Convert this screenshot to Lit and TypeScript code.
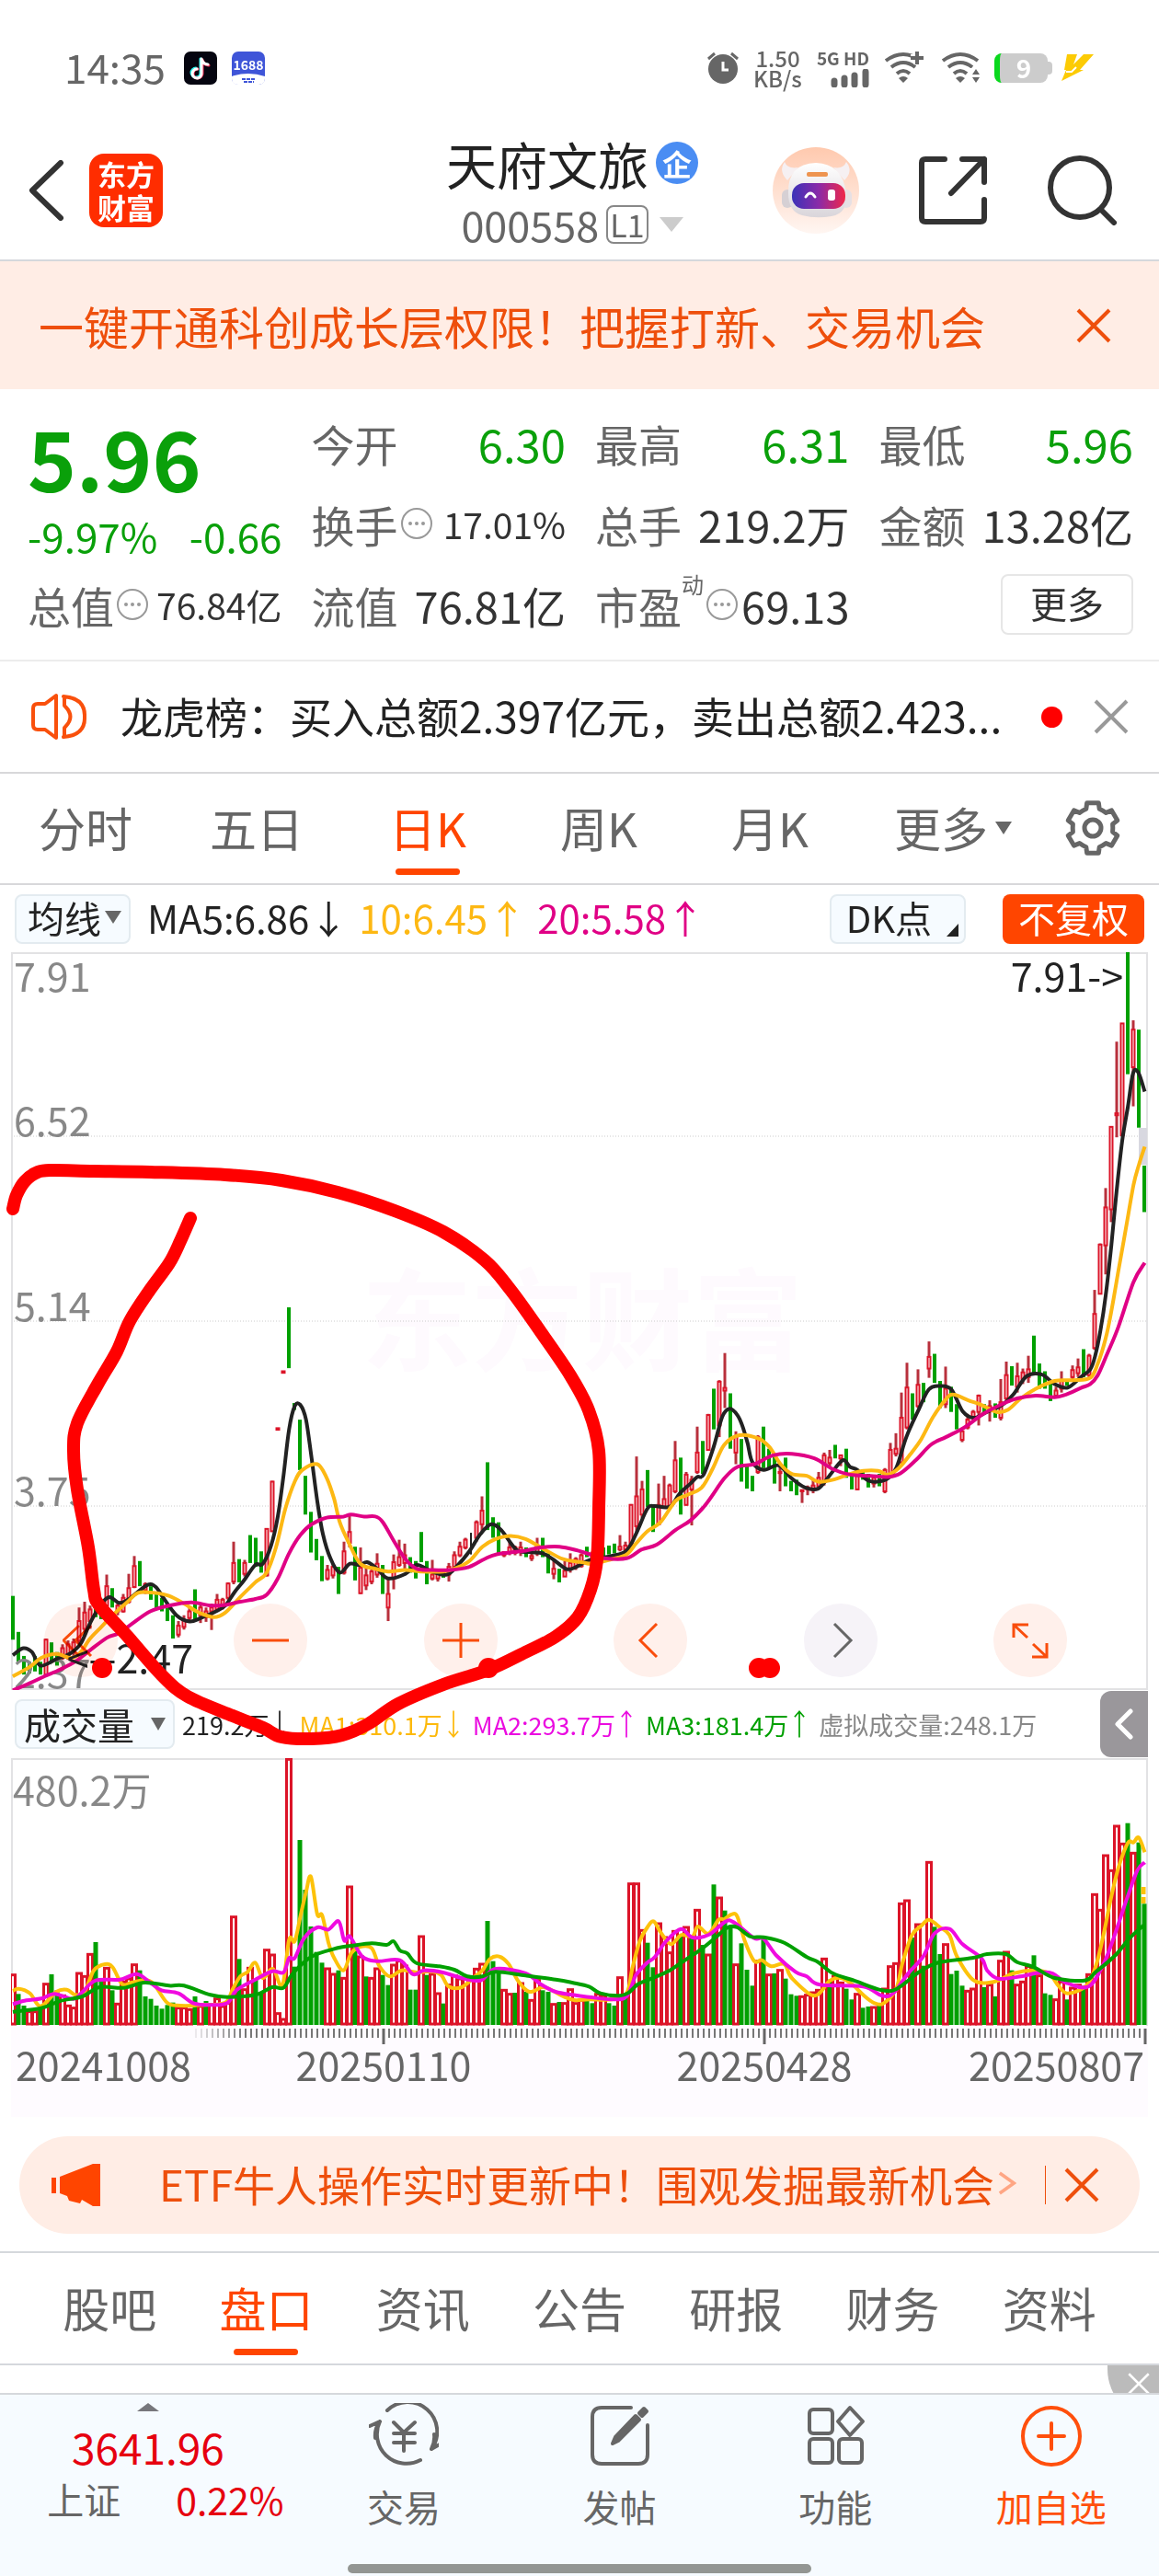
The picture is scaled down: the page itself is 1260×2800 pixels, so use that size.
import { LitElement, html, svg, css } from "lit";
import { customElement, state } from "lit/decorators.js";
import { classMap } from "lit/directives/class-map.js";

const STEP = 6;
const FIRST_X = 14;
const barX = (i: number) => FIRST_X + i * STEP;

/* Price levels count down from the 6.52–5.14 band; one unit is 0.421 of a chart unit. */
const priceY = (v: number) => 205 + v * 0.421;
/* Volume levels count down from the 480.2万 line. */
const volumeY = (v: number) => (v - 213) / 3;

/* One candle per trading day: direction high,low[,body top,body bottom] */
const CANDLES = `g1175,1288 g1268,1345 g1330,1378 g1345,1375 g1330,1370 g1345,1378 r1285,1382,1288,1378 g1295,1345 g1320,1355 r1300,1340,1310,1335
r1290,1340,1300,1330 r1285,1330,1295,1320 r1205,1300,1240,1290 r1190,1270,1218,1260 r1200,1260,1210,1240 g1190,1230 g1190,1235 r1120,1210,1150,1200 g1155,1205 r1195,1225,1200,1215
r1170,1218,1180,1215 r1118,1195,1155,1190 r1072,1155,1098,1152 g1085,1150 r1140,1170,1145,1160 g1150,1185 g1165,1210 g1180,1215 g1205,1240 g1225,1285
r1240,1282,1252,1275 r1225,1262,1238,1255 r1205,1240,1215,1232 g1158,1238 r1195,1245,1205,1225 r1205,1242,1215,1230 r1195,1263,1205,1215 r1170,1215,1185,1210 r1180,1210,1185,1200 r1140,1185,1143,1180
r1035,1145,1090,1138 g1080,1140 r1082,1125,1090,1118 g1018,1090 g1025,1100 g1060,1115 r1000,1125,1002,1122 r878,1010,880,1008 r742,746,742,746 r595,599,595,599
g430,587 g677,695 g720,850 g865,965 g958,1063 g1028,1083 g1072,1137 r1095,1135,1108,1130 r1092,1130,1100,1122 g1100,1170
r1035,1120,1060,1115 r965,1050,1010,1038 g1048,1135 r1050,1170,1102,1168 r1100,1160,1122,1148 r1095,1145,1112,1138 r1065,1128,1092,1120 g1095,1170 r1128,1240,1170,1205 r1068,1158,1088,1130
r1030,1100,1075,1095 r1040,1105,1070,1090 g1075,1115 g1085,1130 g1010,1088 g1085,1145 r1082,1135,1120,1130 r1112,1138,1118,1130 g1105,1128 r1090,1138,1100,1120
r1060,1110,1070,1100 r1035,1075,1048,1070 r1025,1055,1030,1050 k1012,1068 r980,1035,985,1025 r918,1010,955,990 g830,1005 g972,1025 g985,1065 r1060,1075,1062,1070
r1035,1070,1050,1062 r1045,1070,1050,1064 r1035,1072,1050,1060 g1050,1075 r1060,1085,1072,1078 r1025,1072,1045,1065 g1025,1075 g1065,1117 r1085,1132,1105,1118 g1105,1140
r1085,1125,1110,1125 r1065,1115,1090,1105 r1075,1108,1080,1100 r1065,1102,1070,1098 g1048,1075 r1060,1090,1065,1085 r1060,1085,1065,1080 g1050,1080 g1045,1068 g1040,1065
r1018,1060,1048,1055 r1035,1060,1045,1055 r938,1048,940,1045 r815,1010,918,995 r878,975,900,965 g850,945 g940,1010 r885,992,940,990 r865,950,925,948 r885,945,890,942
r775,910,825,905 g818,965 r855,942,862,940 r865,993,875,900 r738,860,805,855 g775,860 r705,800,708,798 g640,745 r618,765,622,735 r548,690,638,645
g652,795 r750,835,765,805 g770,880 g840,898 g865,905 r760,860,765,855 g738,845 g795,845 g815,885 r835,905,855,858
g818,892 g878,905 g875,915 r900,935,902,905 r890,915,895,900 r875,910,890,902 r855,900,870,892 r805,890,812,880 r798,842,818,832 g785,820
r810,840,812,820 g795,870 g862,900 r860,902,865,900 g855,875 g860,895 r865,895,870,885 g860,892 r845,910,850,905 r780,865,798,858
r755,815,795,808 r650,835,715,830 r573,745,637,740 g652,720 r590,690,630,685 g625,675 r518,612,558,588 g550,625 g620,690 r583,690,640,680
g635,700 g680,745 r748,778,750,772 r705,745,720,740 r695,725,700,715 r655,735,658,700 g680,705 r670,725,685,695 g678,715 r615,722,675,715
r570,675,605,665 g582,632 r573,650,608,635 r588,628,598,615 r555,625,590,610 g503,605 g575,640 g595,640 g625,672 r635,662,645,658
r595,650,620,640 g618,632 r580,620,592,610 r562,610,585,600 g538,610 r550,615,555,605 r385,540,447,535 r265,395,268,395 r122,345,172,270 r-36,210,-36,177
r-256,-9,-71,-66 r-303,-14,-303,-14 g-487,-172 r-311,-89,-287,-190 g-287,-34 g64,184`
  .split(/\s+/)
  .map((c) => ({ kind: c[0], v: c.slice(1).split(",").map(Number) }));

const VOLUMES = `r917 g982 g1020 r1037 r1037 g1020 r947 g918 g970 r985 r1018 r1025 r912 r922 r850 g813 g940 r895 g970 r1012
r940 r930 r884 g905 g990 g998 g1020 g1030 g1018 g1010 r1025 r1025 r1030 g990 r1020 g1005 r1015 r995 r1020 r1010
r728 g868 r965 r895 g933 g975 r836 r852 r1043 r1062 r214 g893 g480 g642 g762 g845 g880 r897 r915 g905
r928 r630 g830 r858 g925 r928 r897 g920 g953 r885 r872 r888 g968 g968 r792 g920 r915 r978 g1013 r950
r920 r930 r930 r935 r898 r882 g744 g875 g910 r967 r980 g978 r945 g975 r1000 r935 g970 g975 r1013 g1008
r1010 r965 r1010 r1000 g1005 g1012 r980 r985 g1012 g1020 r926 g985 r620 r620 r772 g815 g895 r750 r795 r845
r775 g790 r762 g790 r706 g822 r852 g625 r666 g710 g758 r884 g817 g903 g955 r872 g800 r917 g915 r902
g932 g983 g988 r988 r983 r975 r967 r865 g935 r922 r943 g965 g1000 r980 g1027 g1023 r1023 g1018 r963 r890
r880 r685 r675 g798 r753 g890 r550 g763 g852 r818 g917 g906 g955 r970 r963 r858 g960 r950 g990 r872
r843 g905 r950 r940 r890 g856 r920 g980 g985 r998 r940 g1000 r960 r950 g955 r916 r655 r706 r528 r577
r432 r490 g425 r520 g488 g688`
  .split(/\s+/)
  .map((c) => ({ kind: c[0], v: Number(c.slice(1)) }));

type Point = [number, number];
/* Line samples come in two halves; the second half counts x from chart position 620. */
const samples = (early: string, late: string, y: (v: number) => number): Point[] => {
  const read = (s: string, from: number) =>
    s.trim().split(/\s+/).map((p) => {
      const [a, b] = p.split(",").map(Number);
      return [from + a / 2.45, y(b)] as Point;
    });
  return [...read(early, 0), ...read(late, 620)];
};

/* Catmull-Rom curve through every sample. */
const curve = (p: Point[]) => {
  let d = `M${p[0][0].toFixed(1)} ${p[0][1].toFixed(1)}`;
  for (let i = 0; i < p.length - 1; i++) {
    const a = p[i - 1] ?? p[i];
    const b = p[i];
    const c = p[i + 1];
    const e = p[i + 2] ?? c;
    const n = [b[0] + (c[0] - a[0]) / 6, b[1] + (c[1] - a[1]) / 6, c[0] - (e[0] - b[0]) / 6, c[1] - (e[1] - b[1]) / 6, c[0], c[1]];
    d += `C${n.map((x) => x.toFixed(1)).join(" ")}`;
  }
  return d;
};

const MA5 = curve(samples(
  `34,1328 62,1310 85,1320 108,1355 150,1338 185,1325 215,1298 240,1245 270,1195 292,1178 318,1193 345,1182 392,1147 415,1152 435,1180 470,1225 505,1241 535,1232 575,1215 600,1200 625,1165 650,1135 680,1095 700,1092 722,1045 740,970 755,865 770,745 785,685 800,682 815,720 830,820 845,930 860,1015 880,1078 905,1115 932,1092 958,1095 978,1088 1005,1105 1034,1130 1080,1118 1110,1095 1150,1112 1190,1120 1220,1095 1250,1060 1280,1015 1308,990 1335,1005 1375,1055 1410,1062 1445,1065 1475,1082 1510,1106`,
  `20,1098 50,1083 110,1072 150,1058 175,1015 205,950 225,943 265,945 290,912 320,885 338,868 355,862 382,790 405,712 425,692 445,708 458,735 472,780 485,830 515,850 555,838 590,872 625,895 660,898 690,865 725,825 745,842 765,850 795,878 840,875 868,845 895,765 925,700 955,642 985,633 1015,642 1045,698 1075,715 1110,700 1150,682 1180,655 1215,608 1255,603 1290,628 1325,637 1360,610 1385,590 1398,555 1412,490 1426,400 1441,270 1455,130 1470,0 1485,-87 1499,-174 1513,-176 1530,-127`,
  priceY));
const MA10 = curve(samples(
  `34,1383 80,1358 110,1335 150,1325 190,1335 215,1320 240,1285 270,1255 300,1225 340,1190 368,1167 410,1167 450,1175 490,1195 530,1218 570,1230 600,1218 640,1178 680,1140 710,1115 735,1050 760,950 785,880 805,850 845,835 870,870 890,925 905,985 930,1040 960,1092 1000,1105 1034,1112 1080,1108 1120,1112 1180,1112 1215,1103 1250,1085 1285,1048 1320,1028 1360,1020 1400,1028 1450,1055 1500,1080`,
  `30,1088 60,1092 110,1080 150,1068 175,1040 205,1008 240,985 280,930 310,915 350,895 380,845 410,785 450,760 500,768 530,790 560,835 590,860 630,865 660,880 700,875 745,860 780,852 820,852 845,862 875,845 905,810 935,770 965,715 1000,668 1020,655 1060,670 1095,682 1135,700 1165,695 1200,665 1240,640 1290,620 1340,618 1385,612 1405,575 1426,510 1441,440 1460,335 1480,225 1500,115 1515,60 1530,15`,
  priceY));
const MA20 = curve(samples(
  `34,1419 80,1400 120,1382 160,1365 200,1345 240,1315 285,1283 315,1272 350,1248 400,1215 450,1200 510,1192 560,1200 600,1198 640,1190 680,1183 710,1172 740,1130 770,1065 800,1018 830,990 870,973 915,970 935,965 970,970 1000,970 1020,985 1050,1035 1080,1080 1110,1105 1150,1108 1200,1108 1250,1100 1290,1080 1325,1067 1400,1058 1440,1050 1490,1048`,
  `20,1058 60,1070 90,1078 150,1078 190,1055 230,1043 280,1005 320,980 360,940 410,872 445,842 490,835 540,812 590,808 650,820 700,848 745,862 800,865 845,868 880,858 920,825 960,785 1000,765 1050,740 1100,705 1150,680 1190,665 1240,658 1290,662 1320,655 1360,638 1385,628 1405,605 1430,550 1460,480 1500,365 1530,315`,
  priceY));
const VOL1 = curve(samples(
  `34,972 50,965 80,980 108,1022 150,975 178,968 200,985 225,975 250,905 280,885 300,895 325,950 350,945 385,937 410,950 445,1010 480,1020 540,1018 600,1010 620,965 640,925 660,910 680,880 700,930 727,900 752,955 770,805 785,810 800,730 815,650 828,600 845,722 858,725 875,815 890,865 915,905 935,850 960,828 990,833 1010,890 1038,925 1070,905 1110,912 1150,908 1175,920 1195,958 1230,960 1260,930 1285,905 1305,868 1330,860 1355,885 1380,940 1410,975 1445,960 1470,970 1500,990`,
  `10,1002 50,1000 110,1000 150,980 165,900 185,810 205,765 222,745 240,780 268,820 295,790 325,795 340,762 368,785 395,740 410,738 430,722 445,730 465,810 490,875 510,872 535,892 570,885 590,930 650,988 690,940 720,930 750,950 780,985 810,1012 835,1012 868,965 885,880 910,790 935,760 955,740 985,765 1010,790 1030,860 1075,938 1130,942 1180,915 1235,905 1275,915 1300,955 1325,980 1375,955 1400,890 1420,790 1440,670 1460,570 1485,490 1500,488 1514,472 1530,520`,
  volumeY));
const VOL2 = curve(samples(
  `34,1015 70,1003 110,997 145,982 195,998 220,975 255,938 320,935 365,917 400,945 430,970 475,980 515,1012 560,1018 605,1012 630,970 680,935 725,908 755,912 770,865 785,865 810,800 845,765 875,772 902,745 917,808 932,795 965,860 1005,875 1065,872 1100,918 1130,905 1180,912 1230,930 1280,938 1320,900 1400,915 1440,950 1480,975`,
  `5,985 50,992 110,1000 150,990 175,920 205,880 225,862 255,810 295,770 325,798 370,788 415,745 440,752 490,800 515,802 550,858 600,910 630,925 665,952 780,958 830,988 860,980 900,915 940,860 970,785 1010,770 1045,820 1095,865 1110,905 1140,932 1200,925 1250,912 1285,915 1320,945 1380,958 1420,885 1450,790 1480,680 1510,580 1530,553`,
  volumeY));
const VOL3 = curve(samples(
  `34,1040 110,1028 160,1005 220,990 265,960 330,962 385,945 450,955 490,955 560,985 605,992 680,985 725,960 755,962 780,915 830,860 900,832 935,825 990,817 1030,822 1048,810 1065,840 1085,850 1110,882 1170,892 1210,903 1245,925 1285,925 1320,910 1400,922 1480,935`,
  `5,945 50,958 80,980 130,988 155,978 180,950 210,935 265,905 310,868 350,835 385,800 420,765 445,765 480,795 515,797 570,815 630,862 660,878 700,915 760,940 830,970 870,965 930,910 980,880 1070,865 1110,852 1160,852 1190,878 1235,895 1290,930 1370,938 1400,910 1450,858 1490,800 1530,755`,
  volumeY));

const MARKER = curve([
  [14, 279], [18, 264], [27, 249], [41, 239], [57, 237], [102, 238], [163, 239], [245, 242], [306, 248], [367, 261], [429, 281],
  [482, 304], [527, 335], [555, 367], [588, 413], [620, 460], [640, 498], [651, 542], [651, 605], [649, 660], [642, 693], [628, 723],
  [604, 744], [571, 761], [531, 780], [482, 796], [433, 817], [400, 839], [372, 851], [339, 855], [306, 853], [286, 843], [253, 830],
  [204, 809], [176, 786], [139, 744], [108, 710], [102, 693], [96, 647], [84, 584], [80, 542], [84, 512], [106, 470], [127, 434],
  [141, 401], [163, 367], [184, 338], [196, 314], [207, 289],
]);

const GEAR = (() => {
  const pt = (r: number, deg: number) => {
    const a = (deg * Math.PI) / 180;
    return `${(32 + r * Math.sin(a)).toFixed(1)} ${(32 - r * Math.cos(a)).toFixed(1)}`;
  };
  let d = "";
  for (let k = 0; k < 6; k++) {
    const t = k * 60;
    d += `${k ? "L" : "M"}${pt(28, t - 13)}L${pt(28, t + 13)}L${pt(22, t + 19)}Q${pt(22, t + 30)} ${pt(22, t + 41)}`;
  }
  return d + "Z";
})();

const cross = html`<svg class="cross" viewBox="0 0 38 38" aria-hidden="true"><path d="M2 2L36 36M36 2L2 36" /></svg>`;
const info = html`<svg class="info" viewBox="0 0 36 36" aria-hidden="true">
  <circle cx="18" cy="18" r="16" fill="none" stroke="#999" stroke-width="2" />
  <circle cx="11" cy="18" r="2" /><circle cx="18" cy="18" r="2" /><circle cx="25" cy="18" r="2" />
</svg>`;
const wifi = (extra: unknown) => html`<svg class="wifi" viewBox="0 0 44 36" aria-hidden="true">
  <g fill="none" stroke="#666" stroke-width="4">
    <path d="M2 10Q21 -4 40 10" /><path d="M8 17Q21 7 34 17" /><path d="M14 24Q21 18 28 24" />
  </g>
  <path d="M16 29Q21 25 26 29L21 34Z" fill="#666" />${extra}
</svg>`;
const arrow = (up: boolean) => html`<svg class="arrow" viewBox="0 0 14 38" aria-hidden="true">
  <path d=${up ? "M7 36V3M1 10L7 3L13 10" : "M7 2V35M1 28L7 35L13 28"} />
</svg>`;

@customElement("stock-chart")
export class StockChart extends LitElement {
  static styles = css`
    :host { display: block; font-family: "Noto Sans CJK SC", "Noto Sans", sans-serif; }
    .charts { position: relative; margin: 0 12px; }
    .plot { display: block; width: 100%; }
    .plot text { font-size: 43px; fill: #888; }
    .plot .note { fill: #222; }
    .plot .date { fill: #666; }
    .plot .watermark { font-size: 120px; font-weight: 700; fill: #fefafe; }
    .frame { fill: none; stroke: #e2e2e4; stroke-width: 2; }
    .grid { stroke: #ccc; stroke-width: 1; stroke-dasharray: 1 2; }
    .line { fill: none; stroke-width: 4; stroke-linejoin: round; }
    .dark { stroke: #222; } .amber { stroke: #fdb813; } .pink { stroke: #e00085; }
    .gold { stroke: #fdc20a; } .magenta { stroke: #f00be0; } .green { stroke: #00a000; }
    .up { stroke: #dc1428; fill: #fff; stroke-width: 2; }
    .up.thick { stroke-width: 3; }
    .up-wick { stroke: #b8303c; stroke-width: 3; }
    .down { fill: #00a000; }
    .price { position: relative; }
    .tools { position: absolute; left: 36px; right: 88px; bottom: 14px; display: flex; justify-content: space-between; mix-blend-mode: multiply; }
    .tool { width: 80px; height: 80px; padding: 0; border: 0; border-radius: 50%; background: #fff0eb; display: grid; place-items: center; }
    .tool.muted { background: #f6f3f8; }
    .tool svg { width: 40px; height: 40px; fill: none; stroke: #f94d0c; stroke-width: 3; }
    .tool.muted svg { stroke: #666; }
    .bar { display: flex; align-items: center; height: 74px; color: #222; }
    .picker { display: flex; align-items: center; gap: 18px; height: 54px; margin-left: 4px; padding: 0 8px; border: 2px solid #e3ebf0; border-radius: 8px; background: #f6fbff; font: inherit; font-size: 40px; line-height: 1; color: #222; white-space: nowrap; }
    .tri { width: 0; height: 0; border: 8px solid transparent; border-top: 14px solid #666; border-bottom: 0; }
    .values { display: flex; align-items: center; gap: 15px; margin: 0 0 0 8px; padding: 0; list-style: none; font-size: 27px; white-space: nowrap; }
    .values li { display: flex; align-items: center; gap: 6px; }
    .arrow { width: 12px; height: 34px; fill: none; stroke: currentColor; stroke-width: 2; }
    .c1 { color: #fdb90b; } .c2 { color: #ea0be0; } .c3 { color: #00a000; } .c4 { color: #888; }
    .collapse { flex: none; width: 52px; height: 72px; margin-left: auto; padding: 0; border: 0; border-radius: 12px 0 0 12px; background: #9a979b; display: grid; place-items: center; }
    .collapse svg { width: 24px; height: 34px; fill: none; stroke: #fff; stroke-width: 5; stroke-linecap: round; stroke-linejoin: round; }
    .doodle { position: absolute; left: 0; top: 0; width: 100%; overflow: visible; pointer-events: none; }
  `;

  private candle(c: { kind: string; v: number[] }, i: number) {
    const x = barX(i);
    const [high, low, top, bottom] = c.v.map(priceY);
    if (c.kind === "g") return svg`<rect class="down" x=${x - 2} y=${high} width="4" height=${low - high} />`;
    if (c.kind === "k") return svg`<rect x=${x - 1} y=${high} width="2" height=${low - high} fill="#222" />`;
    return svg`<path class="up-wick" d="M${x} ${high}V${low}" />
      <rect class="up" x=${x - 1.5} y=${top} width="3" height=${Math.max(bottom - top, 1)} />`;
  }

  private volume(c: { kind: string; v: number }, i: number) {
    const x = barX(i);
    const y = volumeY(c.v);
    return c.kind === "g"
      ? svg`<rect class="down" x=${x - 2.5} y=${y} width="5" height=${290 - y} />`
      : svg`<rect class="up thick" x=${x - 2.5} y=${y + 1} width="5" height=${288 - y} />`;
  }

  render() {
    return html`<div class="charts">
      <div class="price">
        <svg class="plot" viewBox="12 0 1236 802" role="img" aria-label="日K">
          <text class="watermark" x="633" y="446" text-anchor="middle">东方财富</text>
          ${[200, 401, 602].map((y) => svg`<path class="grid" d="M12 ${y}H1247" />`)}
          <rect class="frame" x="13" y="1" width="1234" height="800" />
          <rect x="1238" y="191" width="9" height="40" fill="#d8d8e0" />
          ${CANDLES.map((c, i) => this.candle(c, i))}
          ${[["7.91", 43], ["6.52", 200], ["5.14", 401], ["3.75", 602], ["2.37", 800]].map(([t, y]) => svg`<text x="15" y=${y}>${t}</text>`)}
          <path class="line dark" d=${MA5} /><path class="line amber" d=${MA10} /><path class="line pink" d=${MA20} />
          <text class="note" x="1221" y="43" text-anchor="end">7.91-&gt;</text>
          <text class="note" x="210" y="784" text-anchor="end">&lt;--2.47</text>
        </svg>
        <div class="tools">
          <button class="tool" aria-label="最早"><svg viewBox="0 0 40 40"><path d="M18 4L1 20L18 37M31 4L14 20L31 37" /></svg></button>
          <button class="tool" aria-label="缩小"><svg viewBox="0 0 40 40"><path d="M0 20H40" /></svg></button>
          <button class="tool" aria-label="放大"><svg viewBox="0 0 40 40"><path d="M0 20H40M20 1V39" /></svg></button>
          <button class="tool" aria-label="向左"><svg viewBox="0 0 40 40"><path d="M27 2L9 20L27 38" /></svg></button>
          <button class="tool muted" aria-label="向右"><svg viewBox="0 0 40 40"><path d="M13 2L31 20L13 38" /></svg></button>
          <button class="tool" aria-label="全屏"><svg viewBox="0 0 40 40"><path d="M2 17V3H18M2 3L17 17M38 23V38H22M38 38L23 24" /></svg></button>
        </div>
      </div>
      <div class="bar">
        <button class="picker">成交量<span class="tri"></span></button>
        <ul class="values">
          <li>219.2万${arrow(false)}</li>
          <li class="c1">MA1:310.1万${arrow(false)}</li>
          <li class="c2">MA2:293.7万${arrow(true)}</li>
          <li class="c3">MA3:181.4万${arrow(true)}</li>
          <li class="c4">虚拟成交量:248.1万</li>
        </ul>
        <button class="collapse" aria-label="展开"><svg viewBox="0 0 24 34"><path d="M19 3L5 17L19 31" /></svg></button>
      </div>
      <svg class="plot" viewBox="12 0 1236 390" role="img" aria-label="成交量">
        <rect x="12" y="290" width="1236" height="100" fill="#fefbff" />
        <path class="frame" d="M13 291V1H1247V291" />
        <text x="14" y="52">480.2万</text>
        ${VOLUMES.map((c, i) => this.volume(c, i))}
        <path d="M1243 140V158" stroke="#fdc20a" stroke-width="5" stroke-dasharray="8 3" />
        <path class="line gold" d=${VOL1} /><path class="line magenta" d=${VOL2} /><path class="line green" d=${VOL3} />
        ${VOLUMES.map((_, i) => {
          const x = barX(i) + 1;
          if (x < 210) return null;
          return svg`<path d="M${x} 294V304" stroke="#777" stroke-width="2" opacity=${Math.min(1, (x - 205) / 60)} />`;
        })}
        <path d="M417 294V311M831 294V311M1245 294V311" stroke="#666" stroke-width="3" />
        <text class="date" x="17" y="351">20241008</text>
        <text class="date" x="417" y="351" text-anchor="middle">20250110</text>
        <text class="date" x="831" y="351" text-anchor="middle">20250428</text>
        <text class="date" x="1244" y="351" text-anchor="end">20250807</text>
      </svg>
      <svg class="doodle" viewBox="12 0 1236 880" aria-hidden="true">
        <path d=${MARKER} fill="none" stroke="#f00" stroke-width="14" stroke-linecap="round" stroke-linejoin="round" />
        ${[111, 531, 825, 837].map((x) => svg`<circle cx=${x} cy="778" r="11" fill="#f00" />`)}
      </svg>
    </div>`;
  }
}

@customElement("app-root")
export class AppRoot extends LitElement {
  @state() private period = "日K";
  @state() private section = "盘口";

  static styles = css`
    :host { display: block; background: #fff; color: #333; font-family: "Noto Sans CJK SC", "Noto Sans", sans-serif; }
    * { box-sizing: border-box; }
    button { font: inherit; line-height: 1; color: inherit; background: none; border: 0; padding: 0; white-space: nowrap; }
    svg { display: block; flex: none; }
    .cross { width: 38px; height: 38px; fill: none; stroke: currentColor; stroke-width: 4; }

    .status { display: flex; align-items: center; height: 132px; padding: 16px 70px 0 70px; color: #666; }
    .clock { font-size: 44px; line-height: 1; margin-right: 20px; padding-bottom: 4px; }
    .app { width: 36px; height: 36px; margin-right: 16px; }
    .system { display: flex; align-items: center; margin-left: auto; }
    .alarm { width: 36px; height: 36px; margin-right: 15px; }
    .speed { display: grid; justify-items: center; font-size: 24px; font-weight: 500; line-height: 22px; margin-right: 16px; }
    .cell { display: grid; justify-items: end; gap: 3px; font-size: 19px; font-weight: 700; line-height: 18px; margin-right: 16px; }
    .bars { width: 42px; height: 20px; }
    .wifi { width: 44px; height: 36px; margin-right: 18px; }
    .wifi + .wifi { margin-right: 14px; }
    .battery { display: flex; align-items: center; margin-right: 10px; }
    .battery-body { width: 58px; height: 32px; border-left: 6px solid #0ad81e; border-radius: 8px; background: #ccc; color: #fff; font-size: 28px; font-weight: 700; line-height: 30px; text-align: center; }
    .battery-tip { width: 5px; height: 14px; border-radius: 0 4px 4px 0; background: #ccc; }
    .bolt { width: 36px; height: 32px; }

    .head { display: grid; grid-template-columns: 1fr auto 1fr; align-items: center; height: 152px; padding: 0 46px 0 30px; border-bottom: 2px solid #d5d8dc; }
    .head-left { display: flex; align-items: center; gap: 27px; }
    .back { width: 40px; height: 66px; fill: none; stroke: #333; stroke-width: 6; stroke-linecap: round; stroke-linejoin: round; }
    .logo { display: grid; place-content: center; width: 80px; height: 80px; border-radius: 16px; background: #ff2d00; color: #fff; font-size: 31px; font-weight: 700; line-height: 36px; text-align: center; text-decoration: none; }
    .title { display: grid; justify-items: center; }
    .name { display: flex; align-items: center; gap: 8px; margin: 0; font-size: 55px; font-weight: 400; line-height: 74px; color: #222; }
    .verified { display: grid; place-content: center; width: 46px; height: 46px; border-radius: 50%; background: #4a8df3; color: #fff; font-size: 32px; font-weight: 700; line-height: 1; }
    .code { display: flex; align-items: center; gap: 8px; font-size: 45px; line-height: 60px; color: #666; }
    .level { border: 2px solid #888; border-radius: 8px; padding: 0 2px; font-size: 34px; line-height: 38px; }
    .chev { width: 0; height: 0; margin-left: 4px; border: 13px solid transparent; border-top: 16px solid #ccc; border-bottom: 0; }
    .head-right { display: flex; align-items: center; justify-content: flex-end; gap: 64px; }
    .robot { width: 94px; height: 94px; }
    .share { width: 76px; height: 76px; fill: none; stroke: #333; stroke-width: 6; stroke-linecap: round; stroke-linejoin: round; }

    .promo { display: flex; align-items: center; justify-content: space-between; height: 139px; padding: 0 52px 0 42px; background: #ffede5; color: #ee4f0c; font-size: 49px; white-space: nowrap; }

    .quote { display: grid; grid-template-columns: repeat(4, 1fr); grid-template-rows: repeat(3, 88px); column-gap: 32px; margin: 0; padding: 14px 28px 16px 30px; border-bottom: 2px solid #ececec; }
    .now { grid-row: span 2; color: #0aa00a; padding-top: 9px; }
    .last { font-size: 90px; font-weight: 700; line-height: 100px; }
    .change { display: flex; justify-content: space-between; font-size: 44px; line-height: 72px; }
    .stat { display: flex; align-items: center; justify-content: space-between; white-space: nowrap; line-height: 1; }
    .stat dt { display: flex; align-items: center; font-size: 47px; color: #666; }
    .stat dd { margin: 0; font-size: 47px; }
    .stat dd.small { font-size: 39px; }
    .stat dd.fall { color: #0aa00a; font-size: 49px; }
    .info { width: 36px; height: 36px; fill: #999; margin-left: 2px; }
    .stat small { padding-bottom: 44px; font-size: 24px; }
    .more { justify-self: end; align-self: center; width: 144px; height: 66px; padding-bottom: 4px; border: 2px solid #e6e6e6; border-radius: 8px; font-size: 40px; }

    .news { display: flex; align-items: center; height: 122px; padding: 0 33px; border-bottom: 2px solid #d8d8da; }
    .speaker { width: 62px; height: 52px; fill: none; stroke: #f9500c; stroke-width: 4; stroke-linejoin: round; stroke-linecap: round; }
    .news a { flex: 1; min-width: 0; margin-left: 36px; padding-bottom: 4px; color: #222; text-decoration: none; font-size: 46px; white-space: nowrap; }
    .dot { width: 23px; height: 23px; border-radius: 50%; background: #f00; margin-right: 34px; }
    .grey { color: #999; }

    .periods { display: grid; grid-template-columns: repeat(6, 186fr) 144fr; height: 121px; border-bottom: 2px solid #d8d8da; font-size: 51px; color: #666; }
    .tab { position: relative; display: flex; align-items: center; justify-content: center; padding-bottom: 2px; }
    .tab:has(.tri) { padding-left: 26px; }
    .tab.on { color: #ff4500; }
    .tab.on::after { content: ""; position: absolute; left: 50%; bottom: 9px; width: 70px; height: 7px; margin-left: -35px; border-radius: 4px; background: #ff4500; }
    .tab .tri { margin-left: 8px; }
    .tri { width: 0; height: 0; border: 9px solid transparent; border-top: 14px solid #666; border-bottom: 0; }
    .gear { width: 64px; height: 64px; fill: none; stroke: #666; stroke-width: 5; stroke-linejoin: round; }

    .averages { display: flex; align-items: center; height: 73px; padding: 0 16px; color: #222; }
    .chip { display: flex; align-items: center; height: 54px; padding: 0 8px 4px 12px; border: 2px solid #e3ebf0; border-radius: 8px; background: #f6fbff; font-size: 40px; }
    .chip .tri { margin-left: 4px; }
    .chip.dk { padding: 0 6px 4px 16px; margin-left: auto; gap: 16px; }
    .corner { width: 0; height: 0; margin-top: 28px; border-left: 13px solid transparent; border-bottom: 14px solid #222; }
    .adjust { height: 54px; margin-left: 40px; padding: 0 17px 4px; border-radius: 8px; background: #ff4500; color: #fff; font-size: 40px; }
    .ma { display: flex; gap: 12px; margin: 0 0 0 18px; padding: 0 0 4px; list-style: none; font-size: 42px; line-height: 1; white-space: nowrap; }
    .amber { color: #fdb813; } .pink { color: #e00085; }

    .etf { display: flex; align-items: center; height: 106px; margin: 21px 21px 19px; padding: 0 44px 0 34px; border-radius: 53px; background: #ffede5; color: #ee4f0c; font-size: 46px; white-space: nowrap; }
    .horn { width: 56px; height: 46px; fill: #ff4500; margin-right: 62px; }
    .etf a { display: flex; align-items: center; flex: 1; padding-bottom: 4px; color: inherit; text-decoration: none; }
    .go { width: 20px; height: 26px; fill: none; stroke: #ffa684; stroke-width: 4; margin-left: 4px; }
    .rule { width: 1px; height: 42px; margin-right: 20px; background: #ee4f0c; }

    .sections { display: grid; grid-template-columns: repeat(7, 1fr); height: 124px; padding: 0 34px; border-top: 2px solid #d5d8dc; border-bottom: 2px solid #d5d8dc; font-size: 51px; color: #666; }
    .strip { display: flex; justify-content: flex-end; height: 30px; overflow: hidden; }
    .float { width: 56px; height: 60px; border-radius: 0 0 0 56px; background: #bbb; color: #fff; display: flex; justify-content: center; padding: 8px 0 0 12px; }
    .float .cross { width: 24px; height: 24px; }

    .foot { display: grid; grid-template-columns: 321fr repeat(4, 234fr); height: 200px; padding-top: 9px; border-top: 2px solid #d5d8dc; background: #f6fbff; position: relative; font-size: 40px; color: #666; }
    .index { display: grid; justify-items: center; align-content: start; color: #e6000f; text-decoration: none; }
    .rise { width: 0; height: 0; border: 12px solid transparent; border-bottom: 9px solid #77777c; border-top: 0; }
    .points { font-size: 46px; line-height: 76px; }
    .pct { display: flex; gap: 60px; padding-left: 38px; font-size: 41px; line-height: 38px; }
    .pct span { color: #666; font-size: 40px; }
    .action { display: grid; justify-items: center; align-content: start; gap: 20px; line-height: 40px; }
    .action svg { width: 76px; height: 72px; fill: none; stroke: #666; stroke-width: 4; stroke-linecap: round; stroke-linejoin: round; }
    .action.add { color: #ff4f0c; }
    .action.add svg { stroke: #ff4f0c; }
    .home { position: absolute; left: 30%; right: 30%; bottom: 4px; height: 10px; border-radius: 5px; background: #939693; }
  `;

  private tab(name: string, current: string, pick: () => void, extra: unknown = null) {
    return html`<button class=${classMap({ tab: true, on: name === current })} aria-pressed=${name === current} @click=${pick}>${name}${extra}</button>`;
  }

  private stat(label: unknown, value: string, kind = "") {
    return html`<div class="stat"><dt>${label}</dt><dd class=${kind}>${value}</dd></div>`;
  }

  render() {
    return html`
      <div class="status">
        <span class="clock">14:35</span>
        <svg class="app" viewBox="0 0 36 36" aria-hidden="true">
          <rect width="36" height="36" rx="7" fill="#050510" />
          <g fill="none" stroke-width="3" stroke-linecap="round">
            <path d="M18 8V23A5 5 0 1 1 13 18M18 8Q20 14 25 14" stroke="#25f4ee" />
            <path d="M20 9V24A5 5 0 1 1 15 19M20 9Q22 15 27 15" stroke="#fe2c55" />
            <path d="M19 8V23A5 5 0 1 1 14 19M19 8Q21 14 26 14" stroke="#fff" />
          </g>
        </svg>
        <svg class="app" viewBox="0 0 36 36" aria-hidden="true">
          <rect width="36" height="36" rx="7" fill="#3f55d8" />
          <path d="M0 27Q18 21 36 27V29Q36 36 29 36H7Q0 36 0 29Z" fill="#fff" />
          <text x="18" y="20" text-anchor="middle" font-size="14" font-weight="700" fill="#fff">1688</text>
          <path d="M11 30H25M13 33H24" stroke="#3f55d8" stroke-width="2" stroke-dasharray="4 1" />
        </svg>
        <div class="system">
          <svg class="alarm" viewBox="0 0 36 36" aria-hidden="true">
            <circle cx="18" cy="19" r="16" fill="#666" />
            <path d="M2 8L9 2M34 8L27 2" stroke="#666" stroke-width="3" /><path d="M18 11V20H24" fill="none" stroke="#fff" stroke-width="3" />
          </svg>
          <div class="speed"><span>1.50</span><span>KB/s</span></div>
          <div class="cell">
            <span>5G HD</span>
            <svg class="bars" viewBox="0 0 42 20" aria-hidden="true"><path d="M4 13V17M15 10V17M26 7V17M38 3V17" stroke="#666" stroke-width="7" stroke-linecap="round" /></svg>
          </div>
          ${wifi(svg`<path d="M29 7H43M36 0V14" stroke="#fff" stroke-width="8" /><path d="M29 7H43M36 0V14" stroke="#666" stroke-width="4" />`)}
          ${wifi(svg`<path d="M32 18H44V36H32Z" fill="#fff" /><path d="M34 25L38 19L42 25ZM34 28L38 34L42 28Z" fill="#666" />`)}
          <div class="battery"><div class="battery-body">9</div><div class="battery-tip"></div></div>
          <svg class="bolt" viewBox="0 0 36 32" aria-hidden="true"><path d="M6 1L17 1L13 12L24 1L35 1L20 18L24 18L0 30L5 18L3 18Z" fill="#fccb05" /><path d="M5 20H11L16 15" stroke="#fff" stroke-width="2" fill="none" /></svg>
        </div>
      </div>

      <header class="head">
        <div class="head-left">
          <button aria-label="返回"><svg class="back" viewBox="0 0 40 66"><path d="M36 3L5 33L36 63" /></svg></button>
          <a class="logo" href="#home">东方<br />财富</a>
        </div>
        <div class="title">
          <h1 class="name">天府文旅<span class="verified">企</span></h1>
          <div class="code">000558<span class="level">L1</span><span class="chev"></span></div>
        </div>
        <div class="head-right">
          <button aria-label="智能助手">
            <svg class="robot" viewBox="0 0 94 94">
              <defs>
                <linearGradient id="halo" x1="0" y1="0" x2="0" y2="1"><stop offset="0" stop-color="#ffc9ae" /><stop offset="1" stop-color="#fff6f2" /></linearGradient>
                <linearGradient id="visor"><stop offset="0" stop-color="#3b32b8" /><stop offset=".5" stop-color="#8a2aa8" /><stop offset="1" stop-color="#f0284a" /></linearGradient>
                <linearGradient id="shell" x1="0" y1="0" x2="0" y2="1"><stop offset="0" stop-color="#fff" /><stop offset="1" stop-color="#d9d5da" /></linearGradient>
              </defs>
              <circle cx="47" cy="47" r="47" fill="url(#halo)" />
              <rect x="10" y="46" width="12" height="20" rx="6" fill="#d6d0d4" /><rect x="74" y="46" width="12" height="20" rx="6" fill="#e6e0e4" />
              <path d="M16 36Q6 26 13 16Q16 24 28 22ZM78 36Q88 26 80 16Q77 24 66 22Z" fill="#f6f0f2" />
              <path d="M17 50Q16 18 47 17Q76 18 80 50Q82 72 64 75Q47 78 32 74Q17 70 17 50Z" fill="url(#shell)" />
              <rect x="37" y="27" width="23" height="5" rx="2" fill="#ee9450" />
              <rect x="21" y="39" width="58" height="28" rx="13" fill="url(#visor)" />
              <path d="M36 54Q41 46 46 54" fill="none" stroke="#fff" stroke-width="3" stroke-linecap="round" /><rect x="60" y="46" width="8" height="12" rx="3" fill="#fff" />
            </svg>
          </button>
          <button aria-label="分享"><svg class="share" viewBox="0 0 76 76"><path d="M29 4H8Q4 4 4 8V68Q4 72 8 72H68Q72 72 72 68V48M48 4H72V29M72 4L36 41" /></svg></button>
          <button aria-label="搜索"><svg class="share" viewBox="0 0 76 76"><circle cx="36" cy="35" r="32" /><path d="M59 59L73 73" /></svg></button>
        </div>
      </header>

      <div class="promo"><span>一键开通科创成长层权限！把握打新、交易机会</span><button aria-label="关闭">${cross}</button></div>

      <dl class="quote">
        <div class="now">
          <div class="last">5.96</div>
          <div class="change"><span>-9.97%</span><span>-0.66</span></div>
        </div>
        ${this.stat("今开", "6.30", "fall")} ${this.stat("最高", "6.31", "fall")} ${this.stat("最低", "5.96", "fall")}
        ${this.stat(html`换手${info}`, "17.01%", "small")} ${this.stat("总手", "219.2万")} ${this.stat("金额", "13.28亿")}
        ${this.stat(html`总值${info}`, "76.84亿", "small")} ${this.stat("流值", "76.81亿")}
        ${this.stat(html`市盈<small>动</small>${info}`, "69.13")}
        <button class="more">更多</button>
      </dl>

      <div class="news">
        <svg class="speaker" viewBox="0 0 62 52" aria-hidden="true"><path d="M16 12L28 3V49L16 40H8Q3 40 3 35V17Q3 12 8 12ZM38 15Q49 26 38 37M36 4Q60 6 59 26Q60 46 36 48M37 5V14M37 38V47" /></svg>
        <a href="#news">龙虎榜：买入总额2.397亿元，卖出总额2.423...</a>
        <span class="dot"></span>
        <button class="grey" aria-label="关闭">${cross}</button>
      </div>

      <nav class="periods" aria-label="周期">
        ${["分时", "五日", "日K", "周K", "月K"].map((p) => this.tab(p, this.period, () => (this.period = p)))}
        ${this.tab("更多", this.period, () => (this.period = "更多"), html`<span class="tri"></span>`)}
        <button class="tab" aria-label="设置"><svg class="gear" viewBox="0 0 64 64"><path d=${GEAR} /><circle cx="32" cy="32" r="9" /></svg></button>
      </nav>

      <div class="averages">
        <button class="chip">均线<span class="tri"></span></button>
        <ul class="ma"><li>MA5:6.86↓</li><li class="amber">10:6.45↑</li><li class="pink">20:5.58↑</li></ul>
        <button class="chip dk">DK点<span class="corner"></span></button>
        <button class="adjust">不复权</button>
      </div>

      <stock-chart></stock-chart>

      <div class="etf">
        <svg class="horn" viewBox="0 0 56 46" aria-hidden="true"><path d="M1 15H6V32H1ZM10 14L46 0H54V46H46L34 39L32 43L20 40L18 35L10 32Z" /></svg>
        <a href="#etf">ETF牛人操作实时更新中！围观发掘最新机会<svg class="go" viewBox="0 0 22 28"><path d="M2 2L19 14L2 26" /></svg></a>
        <span class="rule"></span>
        <button aria-label="关闭">${cross}</button>
      </div>

      <nav class="sections" aria-label="栏目">
        ${["股吧", "盘口", "资讯", "公告", "研报", "财务", "资料"].map((s) => this.tab(s, this.section, () => (this.section = s)))}
      </nav>
      <div class="strip"><button class="float" aria-label="关闭">${cross}</button></div>

      <footer class="foot">
        <a class="index" href="#index">
          <i class="rise"></i>
          <div class="points">3641.96</div>
          <div class="pct"><span>上证</span>0.22%</div>
        </a>
        <button class="action">
          <svg viewBox="0 0 76 72"><path d="M20 8A32 32 0 0 1 68 50L77 45M68 50Q72 42 71 34M56 62A32 32 0 0 1 12 20L1 25M12 20Q6 28 7 38M27 21L38 32L50 21M38 32V52M27 33H50M27 43H50" /></svg>交易
        </button>
        <button class="action">
          <svg viewBox="0 0 76 72"><path d="M50 5H18Q8 5 8 15V56Q8 66 18 66H58Q68 66 68 56V24" /><path d="M64 6L67 9L62 14L59 11Z" fill="#666" /><path d="M55 14L59 18L36 41L30 44L33 37Z" fill="#666" /></svg>发帖
        </button>
        <button class="action">
          <svg viewBox="0 0 76 72"><rect x="10" y="7" width="25" height="26" rx="4" /><rect x="10" y="39" width="25" height="26" rx="4" /><rect x="42" y="39" width="25" height="26" rx="4" /><path d="M54 5L68 20L54 35L41 20Z" /></svg>功能
        </button>
        <button class="action add">
          <svg viewBox="0 0 76 72"><circle cx="38" cy="36" r="31" /><path d="M24 36H52M38 22V50" /></svg>加自选
        </button>
        <div class="home"></div>
      </footer>
    `;
  }
}
